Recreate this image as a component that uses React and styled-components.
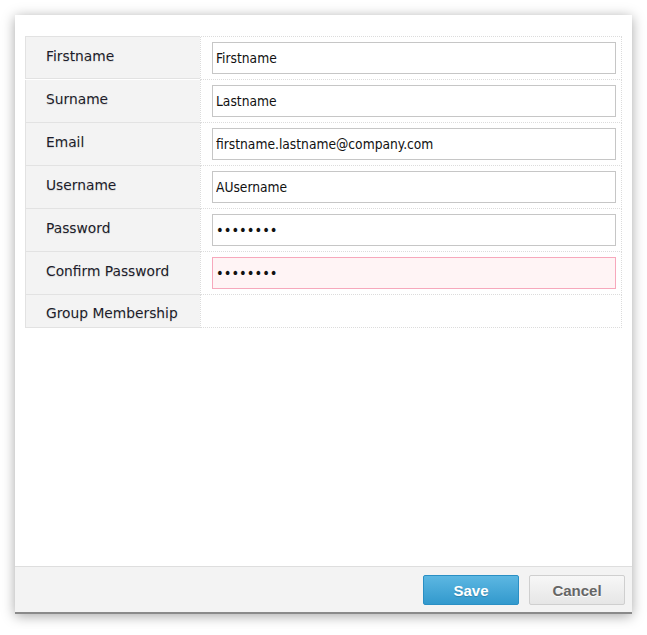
import React from 'react'
import styled, { createGlobalStyle } from 'styled-components'

const GlobalStyle = createGlobalStyle`
  html, body {
    margin: 0;
    padding: 0;
    background: #ffffff;
  }
`

const Page = styled.div`
  padding: 15px;
  width: 617px;
  box-sizing: content-box;
`

const Dialog = styled.div`
  width: 617px;
  height: 599px;
  display: flex;
  flex-direction: column;
  background: #fff;
  box-shadow: 0 2px 12px rgba(0, 0, 0, 0.35);
  box-sizing: border-box;
  border-bottom: 2px solid #8a8a8a;
`

const Body = styled.div`
  flex: 1;
  padding: 21px 10px 0 10px;
`

const Form = styled.div`
  display: grid;
  grid-template-columns: 175px 1fr;
  border-top: 1px dotted #dcdcdc;
`

const Label = styled.div`
  height: ${p => (p.$last ? 33 : 43)}px;
  background: #f3f3f3;
  border-left: 1px solid #e2e2e2;
  border-bottom: 1px solid #e2e2e2;
  border-top: ${p => (p.$first ? '1px solid #e2e2e2' : 'none')};
  margin-top: ${p => (p.$first ? '-1px' : '0')};
  padding: ${p => (p.$last ? 10 : 11)}px 0 0 20px;
  box-sizing: border-box;
  font-family: 'DejaVu Sans', Verdana, sans-serif;
  font-size: 13.8px;
  color: #1c1c2a;
  text-shadow: 0 1px 1px rgba(0, 0, 0, 0.12);
`

const Cell = styled.div`
  height: ${p => (p.$last ? 33 : 43)}px;
  border-left: 1px dotted #dcdcdc;
  border-right: 1px dotted #dcdcdc;
  border-bottom: 1px dotted #dcdcdc;
  padding: 5px 5px 0 11px;
  box-sizing: border-box;
`

const Field = styled.input`
  width: 100%;
  height: 32px;
  box-sizing: border-box;
  border: 1px solid ${p => (p.$error ? '#f7a8bc' : '#c6c6c6')};
  background: ${p => (p.$error ? '#fff4f5' : '#fff')};
  padding: 0 3px;
  margin: 0;
  outline: none;
  font-family: 'DejaVu Sans Condensed', 'DejaVu Sans', Tahoma, sans-serif;
  font-size: ${p => (p.type === 'password' ? '14.5px' : '13.7px')};
  color: #111;
`

const Footer = styled.div`
  height: 46px;
  border-top: 1px solid #dedede;
  background: #f3f3f3;
  display: flex;
  justify-content: flex-end;
  align-items: flex-start;
  gap: 10px;
  padding: 8px 7px 0 0;
  box-sizing: border-box;
`

const Button = styled.button`
  width: 96px;
  height: 30px;
  box-sizing: border-box;
  border-radius: 2px;
  font-family: 'Liberation Sans', Arial, sans-serif;
  font-weight: bold;
  font-size: 15px;
  cursor: pointer;
  border: 1px solid ${p => (p.$primary ? '#2a8fc4' : '#cfcfcf')};
  color: ${p => (p.$primary ? '#fff' : '#666')};
  background: ${p =>
    p.$primary
      ? 'linear-gradient(to bottom, #5cb7e2, #3299cd)'
      : 'linear-gradient(to bottom, #f7f7f7, #e6e6e6)'};
  text-shadow: ${p => (p.$primary ? '0 1px 1px rgba(0,0,0,0.2)' : '0 1px 0 #fff')};
`

const rows = [
  { label: 'Firstname', value: 'Firstname' },
  { label: 'Surname', value: 'Lastname' },
  { label: 'Email', value: 'firstname.lastname@company.com' },
  { label: 'Username', value: 'AUsername' },
  { label: 'Password', value: 'password', type: 'password' },
  { label: 'Confirm Password', value: 'password', type: 'password', error: true },
  { label: 'Group Membership' },
]

export default function App() {
  return (
    <>
      <GlobalStyle />
      <Page>
        <Dialog>
          <Body>
            <Form>
              {rows.map((r, i) => {
                const last = i === rows.length - 1
                return (
                  <React.Fragment key={r.label}>
                    <Label $first={i === 0} $last={last}>{r.label}</Label>
                    <Cell $last={last}>
                      {r.value && (
                        <Field
                          type={r.type || 'text'}
                          defaultValue={r.value}
                          $error={r.error}
                        />
                      )}
                    </Cell>
                  </React.Fragment>
                )
              })}
            </Form>
          </Body>
          <Footer>
            <Button $primary>Save</Button>
            <Button>Cancel</Button>
          </Footer>
        </Dialog>
      </Page>
    </>
  )
}
